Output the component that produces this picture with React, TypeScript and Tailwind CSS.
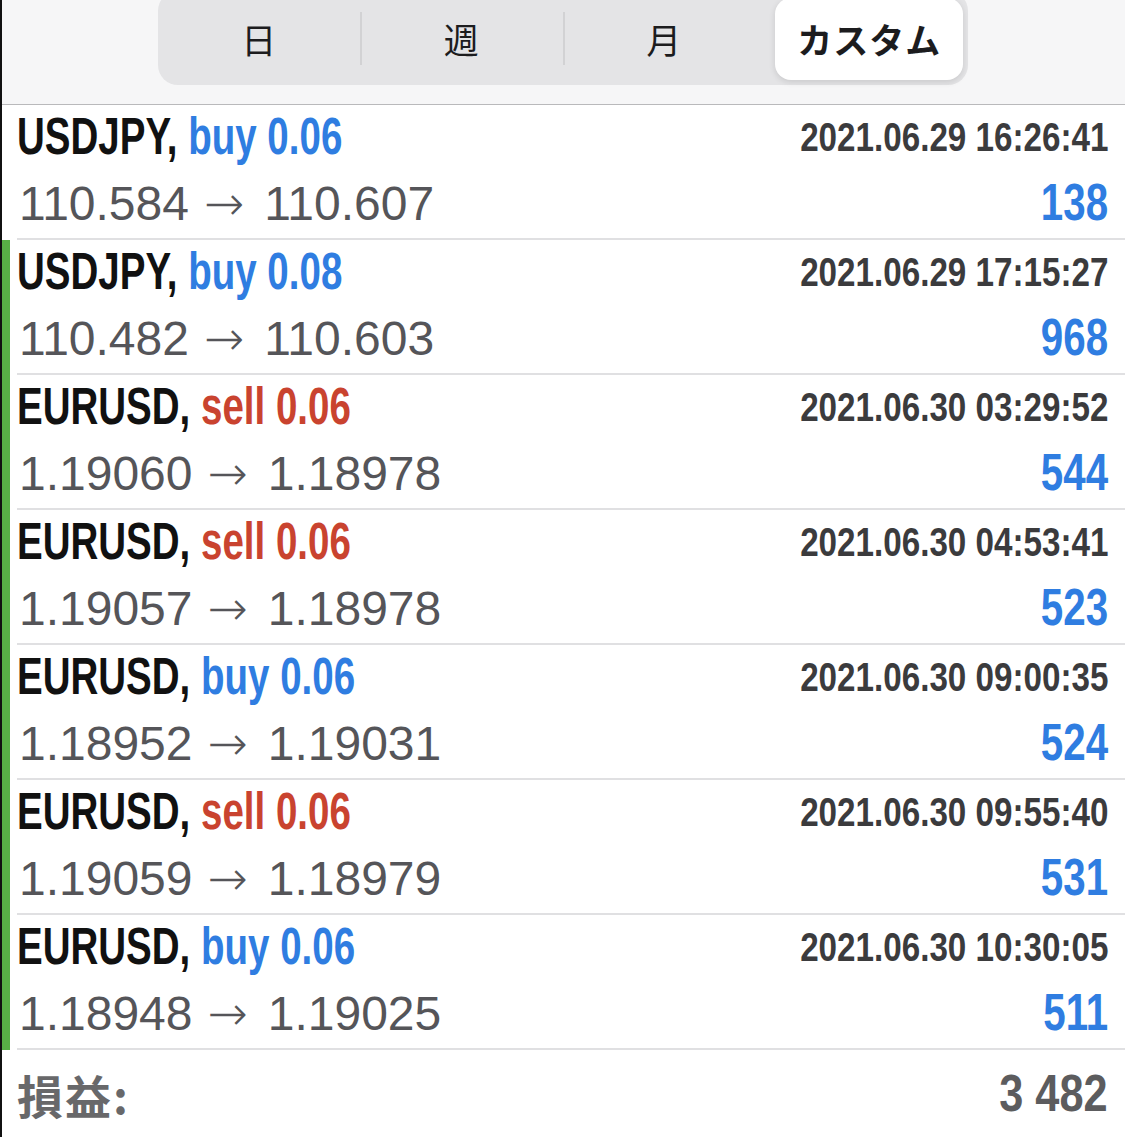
const deals = [
  { pair: "USDJPY", side: "buy", lot: "0.06", time: "2021.06.29 16:26:41", open: "110.584", close: "110.607", profit: "138", bar: false },
  { pair: "USDJPY", side: "buy", lot: "0.08", time: "2021.06.29 17:15:27", open: "110.482", close: "110.603", profit: "968", bar: true },
  { pair: "EURUSD", side: "sell", lot: "0.06", time: "2021.06.30 03:29:52", open: "1.19060", close: "1.18978", profit: "544", bar: true },
  { pair: "EURUSD", side: "sell", lot: "0.06", time: "2021.06.30 04:53:41", open: "1.19057", close: "1.18978", profit: "523", bar: true },
  { pair: "EURUSD", side: "buy", lot: "0.06", time: "2021.06.30 09:00:35", open: "1.18952", close: "1.19031", profit: "524", bar: true },
  { pair: "EURUSD", side: "sell", lot: "0.06", time: "2021.06.30 09:55:40", open: "1.19059", close: "1.18979", profit: "531", bar: true },
  { pair: "EURUSD", side: "buy", lot: "0.06", time: "2021.06.30 10:30:05", open: "1.18948", close: "1.19025", profit: "511", bar: true },
];

const tabs = ["日", "週", "月", "カスタム"];

const sans = "font-['Liberation_Sans','Noto_Sans_CJK_JP',sans-serif]";

function Header() {
  return (
    <div className="h-[105px] border-b border-[#b9b9bb] bg-[#f6f6f7] flex justify-center overflow-hidden">
      <div className="mt-[-9px] ml-[-2px] grid h-[94px] w-[810px] grid-cols-4 rounded-[20px] bg-[#e4e4e6]">
        {tabs.map((t, i) => (
          <div key={t} className="relative flex items-center justify-center">
            {i === 3 && (
              <div className="absolute bottom-[5px] left-[10px] right-[5px] top-[7px] rounded-[16px] bg-white shadow-[0_2px_6px_rgba(0,0,0,0.12)]" />
            )}
            {(i === 1 || i === 2) && (
              <div className="absolute left-0 top-[21px] h-[53px] w-[2px] bg-[#d2d2d4]" />
            )}
            <span
              className={`relative font-['Noto_Sans_CJK_JP',sans-serif] text-[35px] leading-none text-[#1c1c1e] ${
                i === 3 ? "ml-[6px] font-semibold tracking-[1px]" : "font-normal"
              }`}
            >
              {t}
            </span>
          </div>
        ))}
      </div>
    </div>
  );
}

function Row({ d }: { d: (typeof deals)[number] }) {
  const sideColor = d.side === "buy" ? "text-[#2f7de1]" : "text-[#c9432f]";
  return (
    <div className="flex">
      <div className={`w-[8px] shrink-0 ${d.bar ? "bg-[#58b046]" : "bg-white"}`} />
      <div className="w-[7px] shrink-0" />
      <div className="h-[135px] flex-1 border-b-2 border-[#e0e0e2] pr-[17px]">
        <div className="flex h-[64px] justify-between whitespace-nowrap">
          <span className="inline-block origin-left scale-x-[0.755] text-[51px] font-bold leading-[64px] text-[#111]">
            {d.pair},{" "}
            <span className={sideColor}>
              {d.side} {d.lot}
            </span>
          </span>
          <span className="inline-block origin-right scale-x-[0.83] text-[40px] font-bold leading-[64px] text-[#3b3b3d]">
            {d.time}
          </span>
        </div>
        <div className="flex h-[68px] justify-between whitespace-nowrap">
          <span className="pl-[2px] text-[48px] leading-[68px] text-[#555559]">
            {d.open}
            <span className="ml-[15px] mr-[20px] font-['DejaVu_Sans',sans-serif] font-extralight">→</span>
            {d.close}
          </span>
          <span className="inline-block origin-right scale-x-[0.79] text-[51px] font-bold leading-[68px] text-[#2f7de1]">
            {d.profit}
          </span>
        </div>
      </div>
    </div>
  );
}

export default function App() {
  return (
    <div className={`${sans} h-[1137px] w-[1125px] overflow-hidden border-l-2 border-[#111] bg-white`}>
      <Header />
      {deals.map((d) => (
        <Row key={d.time} d={d} />
      ))}
      <div className="flex justify-between px-[15px] pt-[12px] pr-[17px] whitespace-nowrap">
        <span className="font-['Noto_Sans_CJK_JP',sans-serif] text-[46px] font-bold leading-[64px] tracking-[2px] text-[#68686a]">
          損益:
        </span>
        <span className="inline-block origin-right scale-x-[0.85] text-[51px] font-bold leading-[64px] text-[#5c5c5e]">
          3 482
        </span>
      </div>
    </div>
  );
}
